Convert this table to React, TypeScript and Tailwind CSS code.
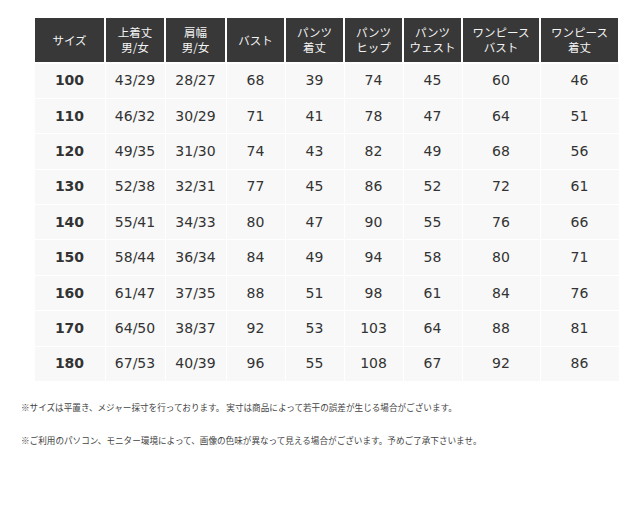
const headers: string[][] = [
  ['サイズ'],
  ['上着丈', '男/女'],
  ['肩幅', '男/女'],
  ['バスト'],
  ['パンツ', '着丈'],
  ['パンツ', 'ヒップ'],
  ['パンツ', 'ウェスト'],
  ['ワンピース', 'バスト'],
  ['ワンピース', '着丈'],
];

const widths = [71, 60, 61, 59, 59, 59, 59, 78, 79];

const rows: string[][] = [
  ['100', '43/29', '28/27', '68', '39', '74', '45', '60', '46'],
  ['110', '46/32', '30/29', '71', '41', '78', '47', '64', '51'],
  ['120', '49/35', '31/30', '74', '43', '82', '49', '68', '56'],
  ['130', '52/38', '32/31', '77', '45', '86', '52', '72', '61'],
  ['140', '55/41', '34/33', '80', '47', '90', '55', '76', '66'],
  ['150', '58/44', '36/34', '84', '49', '94', '58', '80', '71'],
  ['160', '61/47', '37/35', '88', '51', '98', '61', '84', '76'],
  ['170', '64/50', '38/37', '92', '53', '103', '64', '88', '81'],
  ['180', '67/53', '40/39', '96', '55', '108', '67', '92', '86'],
];

export default function App() {
  return (
    <div className="w-[640px] h-[507px] bg-white font-['Noto_Sans_CJK_JP',sans-serif]">
      <div className="pt-[16px] pl-[33px]">
        <table className="table-fixed border-collapse w-[585px]">
          <colgroup>
            {widths.map((w, i) => (
              <col key={i} style={{ width: w }} />
            ))}
          </colgroup>
          <thead>
            <tr className="h-[46px]">
              {headers.map((h, i) => (
                <th
                  key={i}
                  className="bg-[#383838] text-[#f4f4f4] text-[11.5px] font-normal leading-[15px] text-center border-2 border-white p-0"
                >
                  {h.map((line, j) => (
                    <div key={j}>{line}</div>
                  ))}
                </th>
              ))}
            </tr>
          </thead>
          <tbody>
            {rows.map((r, i) => (
              <tr key={i} className="h-[35.4px]">
                {r.map((c, j) => (
                  <td
                    key={j}
                    className={`bg-[#f8f8f8] text-[#333] text-[14px] text-center border border-white p-0 font-['DejaVu_Sans','Noto_Sans_CJK_JP',sans-serif] ${
                      j === 0 ? 'font-bold' : 'font-normal'
                    }`}
                  >
                    {c}
                  </td>
                ))}
              </tr>
            ))}
          </tbody>
        </table>
      </div>
      <div className="pl-[21px] text-[8.6px] text-[#444] leading-[12px]">
        <p className="mt-[19px]">
          ※サイズは平置き、メジャー採寸を行っております。 実寸は商品によって若干の誤差が生じる場合がございます。
        </p>
        <p className="mt-[21px]">
          ※ご利用のパソコン、モニター環境によって、画像の色味が異なって見える場合がございます。予めご了承下さいませ。
        </p>
      </div>
    </div>
  );
}
